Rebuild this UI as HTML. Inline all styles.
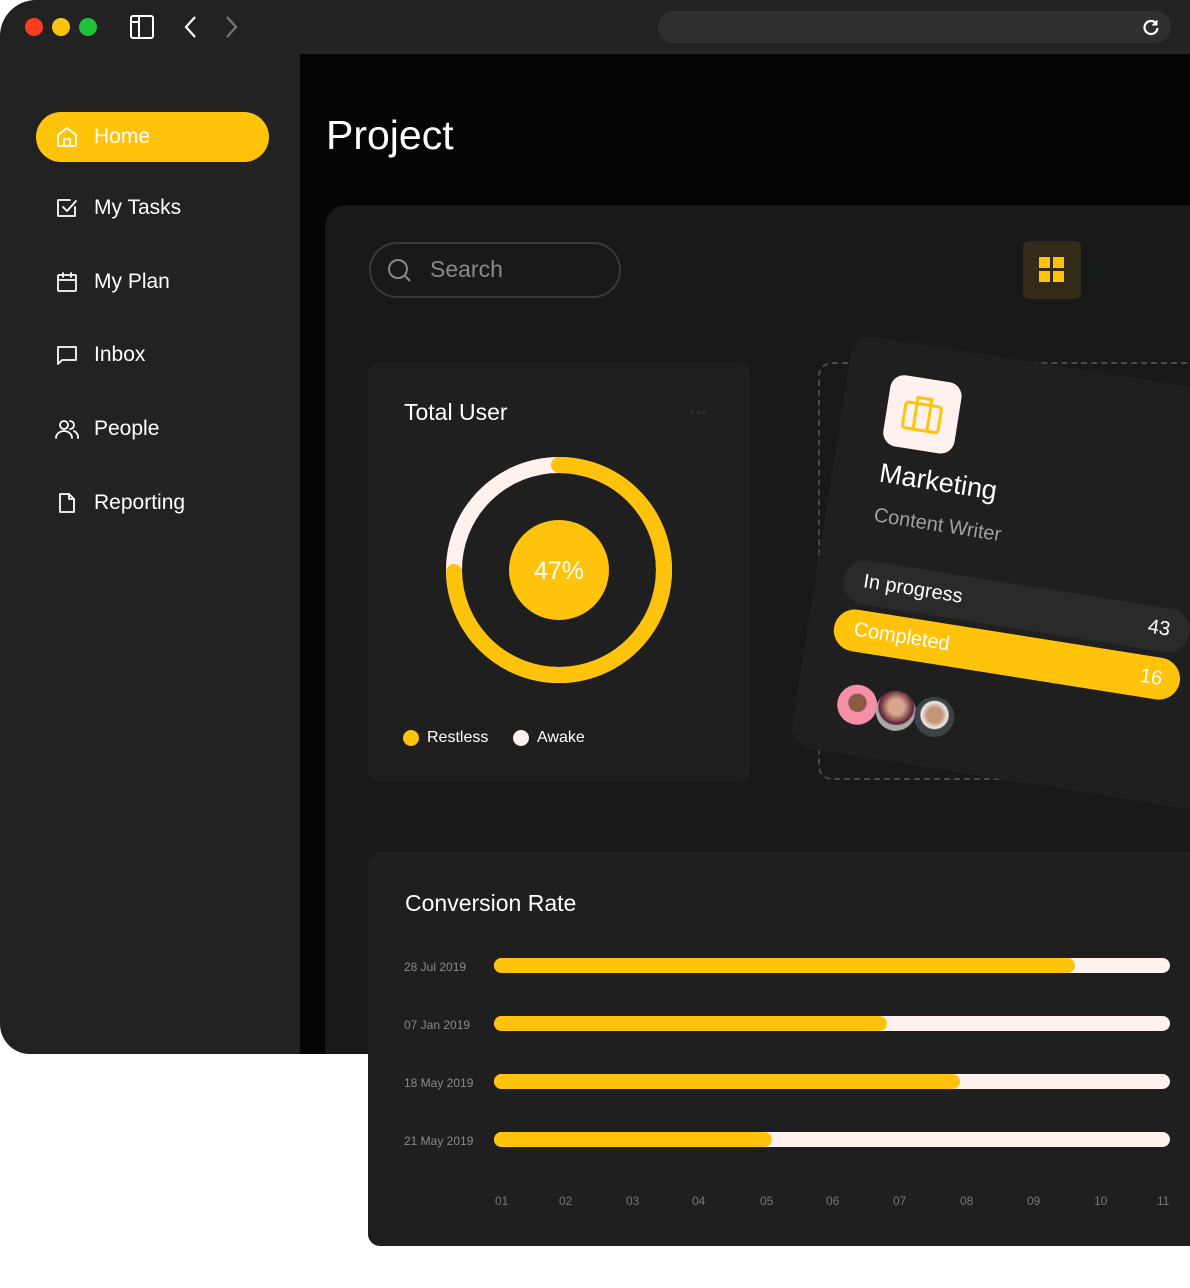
<!DOCTYPE html>
<html><head><meta charset="utf-8"><style>
*{margin:0;padding:0;box-sizing:border-box}
body{width:1190px;height:1288px;background:#fff;position:relative;overflow:hidden;font-family:"Liberation Sans",sans-serif;color:#fff}
.abs{position:absolute}
.win{left:0;top:0;width:1190px;height:1054px;background:#222223;border-radius:36px 0 0 30px;overflow:hidden}
.main{left:300px;top:54px;width:890px;height:1000px;background:#050505}
.panel{left:325px;top:205px;width:900px;height:900px;background:#18191b;border-radius:22px}
.nav{left:55px;font-size:21px;display:flex;align-items:center;gap:15px}
.nav svg{width:24px;height:24px;fill:none;stroke:#fff;stroke-width:1.8;stroke-linecap:round;stroke-linejoin:round}
.card{background:#1f1f1f;border-radius:12px}
.lab{left:404px;font-size:12px;color:#8a8a8a}
.bar{left:494px;width:676px;height:15px;border-radius:8px;background:#fff1ee}
.bar div{height:15px;border-radius:8px;background:#ffc30b}
.ax{top:1194px;font-size:12px;color:#777}
</style></head><body>
<div class="abs win">
 <div class="abs" style="left:25px;top:18px;width:18px;height:18px;border-radius:50%;background:#ff3b1f"></div>
 <div class="abs" style="left:52px;top:18px;width:18px;height:18px;border-radius:50%;background:#ffc30b"></div>
 <div class="abs" style="left:79px;top:18px;width:18px;height:18px;border-radius:50%;background:#1ec337"></div>
 <svg class="abs" style="left:128px;top:13px" width="28" height="28" viewBox="0 0 28 28" fill="none" stroke="#fff" stroke-width="2"><rect x="3" y="3" width="22" height="22" rx="2"/><path d="M11 3v22M3 9h8"/></svg>
 <svg class="abs" style="left:180px;top:14px" width="20" height="26" fill="none" stroke="#fff" stroke-width="2.2"><path d="M15 3L6 13l9 10"/></svg>
 <svg class="abs" style="left:222px;top:14px" width="20" height="26" fill="none" stroke="#777" stroke-width="2.2"><path d="M5 3l9 10-9 10"/></svg>
 <div class="abs" style="left:658px;top:11px;width:513px;height:32px;border-radius:16px;background:#2f2f2f"></div>
 <svg class="abs" style="left:1141px;top:17px" width="20" height="20" fill="none" stroke="#fff" stroke-width="2.2"><path d="M15.5 7A6.5 6.5 0 1 0 16.5 11"/><path d="M16 3v5h-5" fill="#fff" stroke-width="1"/></svg>
 <div class="abs main"></div>
 <div class="abs" style="left:326px;top:112px;font-size:41px">Project</div>
 <div class="abs panel"></div>
 <div class="abs" style="left:36px;top:112px;width:233px;height:50px;border-radius:25px;background:#ffc30b"></div>
 <div class="abs nav" style="top:125px"><svg viewBox="0 0 24 24"><path d="M3 10l9-7 9 7v10a1 1 0 0 1-1 1H4a1 1 0 0 1-1-1z"/><path d="M9 21v-7h6v7"/></svg>Home</div>
 <div class="abs nav" style="top:196px"><svg viewBox="0 0 24 24"><path d="M20 11v9H3V4h12"/><path d="M8 11l4 4 9-10"/></svg>My Tasks</div>
 <div class="abs nav" style="top:270px"><svg viewBox="0 0 24 24"><rect x="3" y="5" width="18" height="16" rx="1"/><path d="M3 10h18M8 3v4M16 3v4"/></svg>My Plan</div>
 <div class="abs nav" style="top:343px"><svg viewBox="0 0 24 24"><path d="M3 21V4h18v13H7z"/></svg>Inbox</div>
 <div class="abs nav" style="top:417px"><svg viewBox="0 0 24 24"><circle cx="9" cy="8" r="4"/><path d="M1 21a8 7 0 0 1 16 0M15 4a4 4 0 0 1 0 8M19 14a7 7 0 0 1 4 7"/></svg>People</div>
 <div class="abs nav" style="top:491px"><svg viewBox="0 0 24 24"><path d="M5 3h9l5 5v13H5z"/><path d="M14 3v5h5"/></svg>Reporting</div>
 <div class="abs" style="left:369px;top:242px;width:252px;height:56px;border-radius:28px;border:2px solid #3a3a3a"></div>
 <svg class="abs" style="left:386px;top:257px" width="26" height="26" fill="none" stroke="#888" stroke-width="2"><circle cx="12" cy="12" r="9"/><path d="M19 19l5 5"/></svg>
 <div class="abs" style="left:430px;top:256px;font-size:23px;color:#8a8a8a">Search</div>
 <div class="abs" style="left:1023px;top:241px;width:58px;height:58px;border-radius:6px;background:#332b17"></div>
 <div class="abs" style="left:1039px;top:257px;width:26px;height:26px;display:grid;grid-template-columns:11px 11px;grid-template-rows:11px 11px;gap:3px"><i style="background:#ffc30b"></i><i style="background:#ffc30b"></i><i style="background:#ffc30b"></i><i style="background:#ffc30b"></i></div>
 <div class="abs card" style="left:368px;top:362px;width:382px;height:420px"></div>
 <div class="abs" style="left:404px;top:399px;font-size:23px">Total User</div>
 <div class="abs" style="left:690px;top:404px;font-size:14px;color:#2e2e2e;letter-spacing:1px">•••</div>
 <svg class="abs" style="left:439px;top:450px" width="240" height="240" viewBox="0 0 240 240"><circle cx="120" cy="120" r="105" fill="none" stroke="#fff1ee" stroke-width="16"/><path d="M120 15A105 105 0 1 1 15 122" fill="none" stroke="#ffc30b" stroke-width="16" stroke-linecap="round"/><circle cx="120" cy="120" r="50" fill="#ffc30b"/><text x="120" y="129" text-anchor="middle" font-size="25" fill="#fff" font-family="Liberation Sans">47%</text></svg>
 <div class="abs" style="left:403px;top:730px;width:16px;height:16px;border-radius:50%;background:#ffc30b"></div>
 <div class="abs" style="left:427px;top:729px;font-size:16px">Restless</div>
 <div class="abs" style="left:513px;top:730px;width:16px;height:16px;border-radius:50%;background:#fff1ee"></div>
 <div class="abs" style="left:537px;top:729px;font-size:16px">Awake</div>
 <div class="abs" style="left:818px;top:362px;width:420px;height:418px;border:2px dashed #4a4a4a;border-radius:14px"></div>
 <div class="abs" style="left:819px;top:364px;width:420px;height:417px;transform:rotate(9deg);background:#1f1f1f;border-radius:22px">
  <div class="abs" style="left:44px;top:33px;width:72px;height:72px;border-radius:14px;background:#fff1ee"></div>
  <svg class="abs" style="left:58px;top:47px" width="44" height="44" fill="none" stroke="#ffc30b" stroke-width="3"><rect x="4" y="12" width="36" height="26" rx="3"/><path d="M15 12V6h14v6M15 12v26M29 12v26"/></svg>
  <div class="abs" style="left:47px;top:118px;font-size:27px">Marketing</div>
  <div class="abs" style="left:48px;top:165px;font-size:20px;color:#a0a0a0">Content Writer</div>
  <div class="abs" style="left:28px;top:222px;width:350px;height:44px;border-radius:22px;background:#2a2a2a"></div>
  <div class="abs" style="left:48px;top:232px;font-size:20px">In progress</div>
  <div class="abs" style="left:26px;top:272px;width:350px;height:42px;border-radius:21px;background:#ffc30b"></div>
  <div class="abs" style="left:46px;top:281px;font-size:20px">Completed</div>
  <div class="abs" style="left:336px;top:232px;font-size:20px">43</div>
  <div class="abs" style="left:336px;top:282px;font-size:20px">16</div>
  <div class="abs" style="left:41px;top:346px;width:40px;height:40px;border-radius:50%;background:radial-gradient(circle at 50% 45%,#8a5a45 30%,#f48fa8 32%)"></div>
  <div class="abs" style="left:80px;top:346px;width:40px;height:40px;border-radius:50%;background:radial-gradient(circle at 50% 40%,#d7a58c 25%,#5a2036 55%,#a9a9a9 60%)"></div>
  <div class="abs" style="left:119px;top:346px;width:40px;height:40px;border-radius:50%;background:radial-gradient(circle at 50% 45%,#c49477 25%,#eee 45%,#3b4345 50%)"></div>
 </div>
</div>
<div class="abs card" style="left:368px;top:852px;width:840px;height:394px;background:#1f1f1f"></div>
<div class="abs" style="left:405px;top:890px;font-size:23px">Conversion Rate</div>
<div class="abs lab" style="top:960px">28 Jul 2019</div><div class="abs bar" style="top:958px"><div style="width:581px"></div></div>
<div class="abs lab" style="top:1018px">07 Jan 2019</div><div class="abs bar" style="top:1016px"><div style="width:393px"></div></div>
<div class="abs lab" style="top:1076px">18 May 2019</div><div class="abs bar" style="top:1074px"><div style="width:466px"></div></div>
<div class="abs lab" style="top:1134px">21 May 2019</div><div class="abs bar" style="top:1132px"><div style="width:278px"></div></div>
<div class="abs ax" style="left:495px">01</div><div class="abs ax" style="left:559px">02</div><div class="abs ax" style="left:626px">03</div><div class="abs ax" style="left:692px">04</div><div class="abs ax" style="left:760px">05</div><div class="abs ax" style="left:826px">06</div><div class="abs ax" style="left:893px">07</div><div class="abs ax" style="left:960px">08</div><div class="abs ax" style="left:1027px">09</div><div class="abs ax" style="left:1094px">10</div><div class="abs ax" style="left:1157px">11</div>
</body></html>
